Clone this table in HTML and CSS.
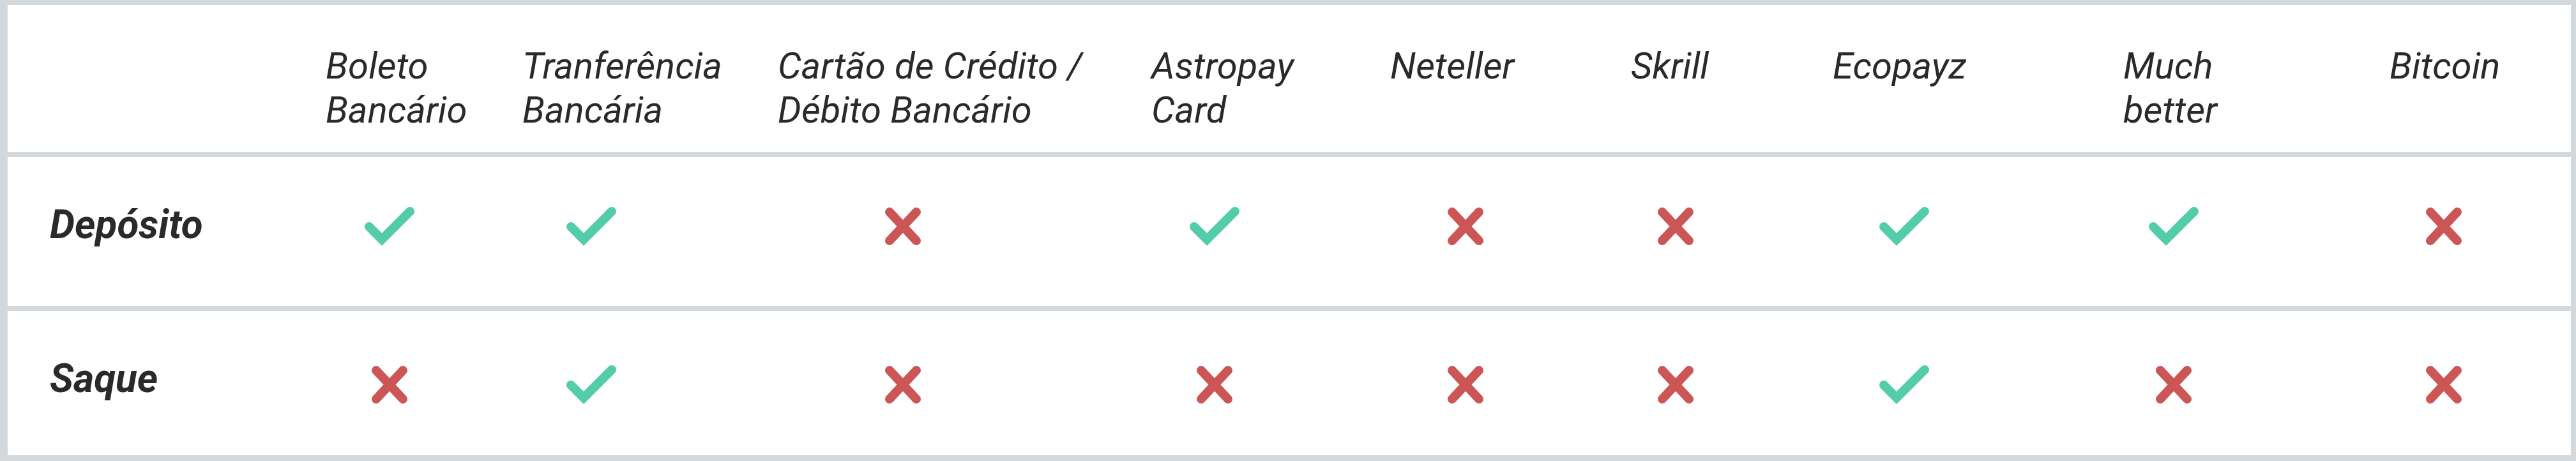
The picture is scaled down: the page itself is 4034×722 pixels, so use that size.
FILE: index.html
```html
<!DOCTYPE html>
<html lang="pt-BR">
<head>
<meta charset="utf-8">
<title>Métodos de pagamento</title>
<link rel="stylesheet" href="styles.css">
</head>
<body>
<div class="pay-table">
  <div class="head">
    <div class="th"></div>
    <div class="th">Boleto<br>Bancário</div>
    <div class="th">Tranferência<br>Bancária</div>
    <div class="th">Cartão de Crédito /<br>Débito Bancário</div>
    <div class="th">Astropay<br>Card</div>
    <div class="th">Neteller</div>
    <div class="th">Skrill</div>
    <div class="th">Ecopayz</div>
    <div class="th">Much<br>better</div>
    <div class="th">Bitcoin</div>
  </div>

  <div class="row row-dep">
    <div class="label">Depósito</div>
    <div class="mark"><svg class="ico-yes" viewBox="0 0 80 64"><polyline points="8,33 28,53 72,9"/></svg></div>
    <div class="mark"><svg class="ico-yes" viewBox="0 0 80 64"><polyline points="8,33 28,53 72,9"/></svg></div>
    <div class="mark"><svg class="ico-no" viewBox="0 0 56 59"><path d="M7 7L49 52M49 7L7 52"/></svg></div>
    <div class="mark"><svg class="ico-yes" viewBox="0 0 80 64"><polyline points="8,33 28,53 72,9"/></svg></div>
    <div class="mark"><svg class="ico-no" viewBox="0 0 56 59"><path d="M7 7L49 52M49 7L7 52"/></svg></div>
    <div class="mark"><svg class="ico-no" viewBox="0 0 56 59"><path d="M7 7L49 52M49 7L7 52"/></svg></div>
    <div class="mark"><svg class="ico-yes" viewBox="0 0 80 64"><polyline points="8,33 28,53 72,9"/></svg></div>
    <div class="mark"><svg class="ico-yes" viewBox="0 0 80 64"><polyline points="8,33 28,53 72,9"/></svg></div>
    <div class="mark"><svg class="ico-no" viewBox="0 0 56 59"><path d="M7 7L49 52M49 7L7 52"/></svg></div>
  </div>

  <div class="row row-saq">
    <div class="label">Saque</div>
    <div class="mark"><svg class="ico-no" viewBox="0 0 56 59"><path d="M7 7L49 52M49 7L7 52"/></svg></div>
    <div class="mark"><svg class="ico-yes" viewBox="0 0 80 64"><polyline points="8,33 28,53 72,9"/></svg></div>
    <div class="mark"><svg class="ico-no" viewBox="0 0 56 59"><path d="M7 7L49 52M49 7L7 52"/></svg></div>
    <div class="mark"><svg class="ico-no" viewBox="0 0 56 59"><path d="M7 7L49 52M49 7L7 52"/></svg></div>
    <div class="mark"><svg class="ico-no" viewBox="0 0 56 59"><path d="M7 7L49 52M49 7L7 52"/></svg></div>
    <div class="mark"><svg class="ico-no" viewBox="0 0 56 59"><path d="M7 7L49 52M49 7L7 52"/></svg></div>
    <div class="mark"><svg class="ico-yes" viewBox="0 0 80 64"><polyline points="8,33 28,53 72,9"/></svg></div>
    <div class="mark"><svg class="ico-no" viewBox="0 0 56 59"><path d="M7 7L49 52M49 7L7 52"/></svg></div>
    <div class="mark"><svg class="ico-no" viewBox="0 0 56 59"><path d="M7 7L49 52M49 7L7 52"/></svg></div>
  </div>
</div>
</body>
</html>
```

FILE: styles.css
```css
html, body {
  margin: 0;
  padding: 0;
  background: #ffffff;
}

body {
  font-family: Roboto, "Liberation Sans", Arial, sans-serif;
  color: #2a2a2a;
}

.pay-table {
  width: 4034px;
  height: 722px;
  box-sizing: border-box;
  border: 8px solid #d2d8db;
  border-left-width: 12px;
  border-bottom-width: 9px;
  background: #ffffff;
}

.head {
  display: grid;
  grid-template-columns: 498px 308px 400px 585px 374px 377px 316px 455px 417px 284px;
  height: 238px;
  box-sizing: border-box;
  border-bottom: 8px solid #d2d8db;
}

.th {
  padding-top: 61px;
  font-size: 58px;
  line-height: 69px;
  font-style: italic;
  font-weight: 400;
  white-space: nowrap;
}

.row {
  display: grid;
  grid-template-columns: 506px 184px 448px 528px 448px 338px 320px 396px 448px 398px;
  align-items: start;
  box-sizing: border-box;
}

.row-dep {
  height: 233px;
  --mark-offset: 76px;
}

.row-saq {
  height: 234px;
  border-top: 8px solid #d2d8db;
  --mark-offset: 83px;
}

.label {
  padding-top: 71px;
  padding-left: 66px;
  font-size: 62px;
  line-height: 69px;
  font-style: italic;
  font-weight: 700;
  white-space: nowrap;
}

.mark {
  display: flex;
  align-items: center;
  justify-content: center;
  height: 64px;
  margin-top: var(--mark-offset);
}

.ico-yes {
  width: 80px;
  height: 64px;
  fill: none;
  stroke: #54ccaa;
  stroke-width: 14;
  stroke-linecap: round;
  stroke-linejoin: miter;
}

.ico-no {
  width: 56px;
  height: 59px;
  fill: none;
  stroke: #cc5656;
  stroke-width: 14;
  stroke-linecap: round;
}
```
